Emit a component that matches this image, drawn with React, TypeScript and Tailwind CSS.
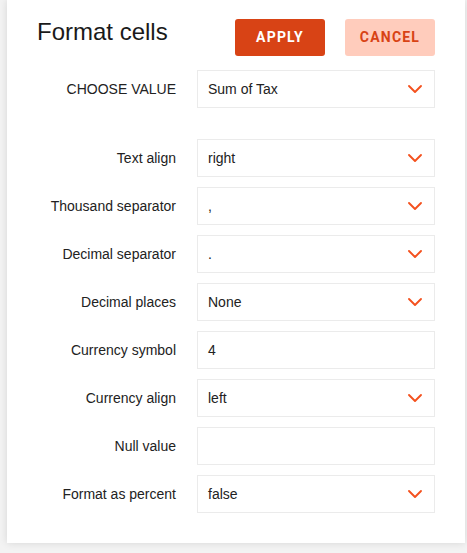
import { ChevronDown } from 'lucide-react'

type Field = {
  label: string
  value: string
  select: boolean
}

const fields: Field[] = [
  { label: 'Text align', value: 'right', select: true },
  { label: 'Thousand separator', value: ',', select: true },
  { label: 'Decimal separator', value: '.', select: true },
  { label: 'Decimal places', value: 'None', select: true },
  { label: 'Currency symbol', value: '4', select: false },
  { label: 'Currency align', value: 'left', select: true },
  { label: 'Null value', value: '', select: false },
  { label: 'Format as percent', value: 'false', select: true },
]

function Row({ label, value, select }: Field) {
  return (
    <div className="flex items-center">
      <div className="w-[169px] text-right text-[14px] text-[#222]">{label}</div>
      <div className="ml-[21px] flex h-[38px] w-[238px] items-center justify-between border border-[#ebebeb] bg-white pl-[10px] pr-[7px] text-[14px] text-[#222]">
        <span>{value}</span>
        {select && <ChevronDown className="h-[24px] w-[24px] text-[#f4511e]" strokeWidth={1.9} />}
      </div>
    </div>
  )
}

export default function App() {
  return (
    <div
      className="h-[553px] w-[467px] overflow-hidden bg-[#f3f3f3] pl-[7px]"
      style={{ fontFamily: '"Liberation Sans", Arial, sans-serif' }}
    >
      <div className="h-[543px] w-[458px] bg-white shadow-[0_0_8px_rgba(0,0,0,0.12)]">
        {/* Header */}
        <div className="flex h-[70px] items-start pt-[18px]">
          <h2 className="ml-[30px] text-[24px] leading-[28px] text-[#1a1a1a]">Format cells</h2>
          <div
            className="ml-auto mr-[30px] mt-[1px] flex gap-[20px]"
            style={{ fontFamily: 'Roboto, "Liberation Sans", sans-serif' }}
          >
            <button className="h-[37px] w-[90px] rounded-[3px] bg-[#d84315] text-[14px] font-bold tracking-[1.2px] text-white">
              APPLY
            </button>
            <button className="h-[37px] w-[90px] rounded-[3px] bg-[#ffccbc] text-[14px] font-bold tracking-[1.2px] text-[#d84315]">
              CANCEL
            </button>
          </div>
        </div>

        {/* Value chooser */}
        <div className="mb-[31px]">
          <Row label="CHOOSE VALUE" value="Sum of Tax" select />
        </div>

        {/* Format options */}
        <div className="flex flex-col gap-[10px]">
          {fields.map(f => (
            <Row key={f.label} {...f} />
          ))}
        </div>
      </div>
    </div>
  )
}
